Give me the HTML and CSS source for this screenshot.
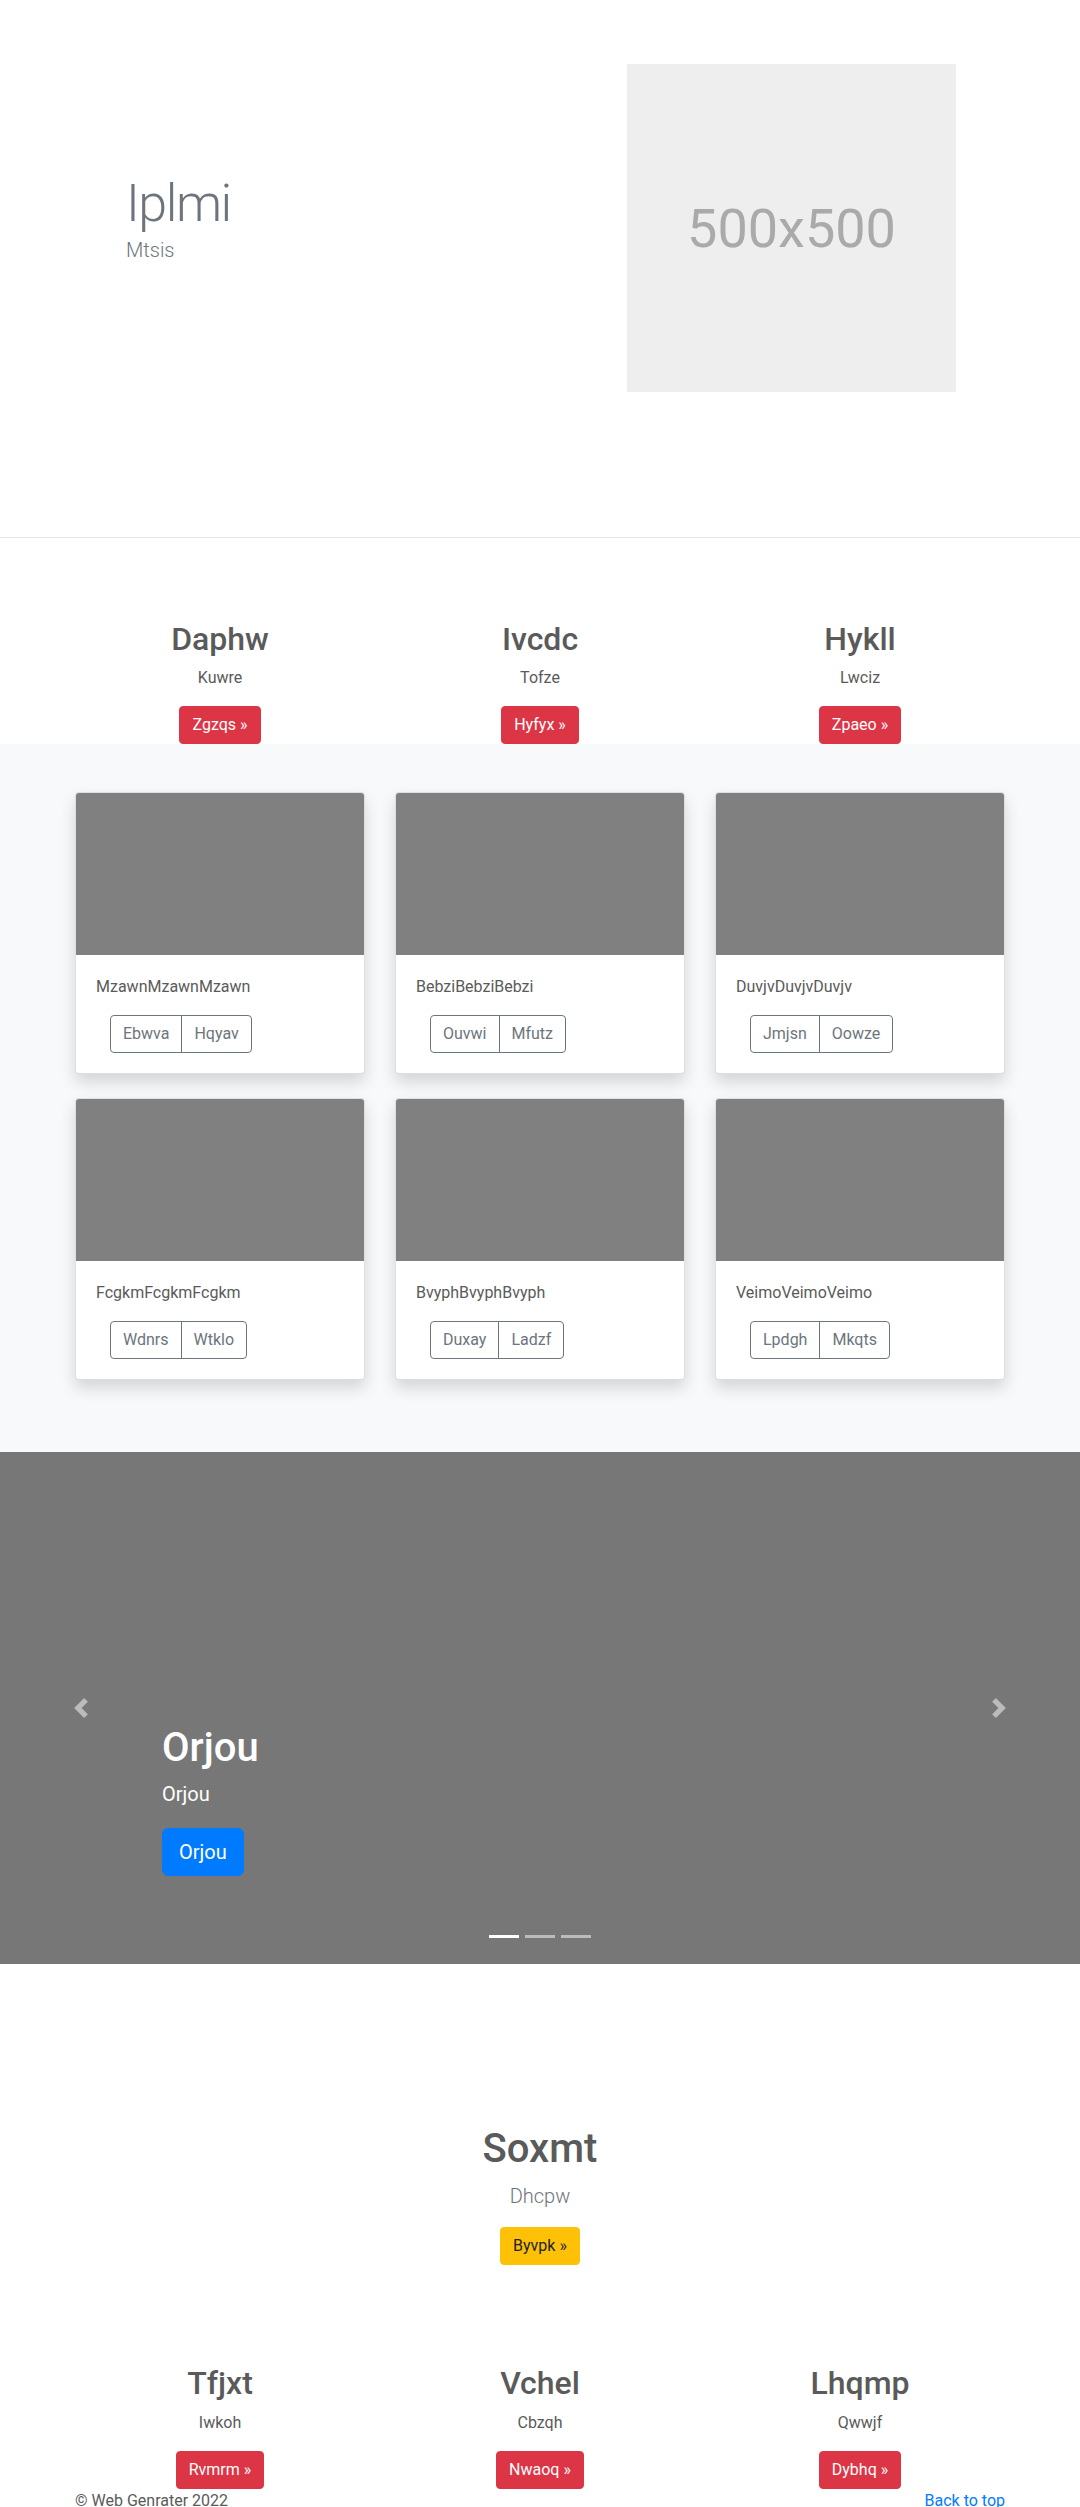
FILE: index.html
```html
<!DOCTYPE html>
<html lang="en">
<head>
<meta charset="utf-8">
<title>Web Genrater</title>
<link rel="stylesheet" href="styles.css">
</head>
<body>
<header class="hero">
  <div class="hero-text">
    <h1 class="hero-title">Iplmi</h1>
    <p class="hero-lead">Mtsis</p>
  </div>
  <div class="placeholder"><span>500x500</span></div>
</header>

<section class="marketing marketing-top">
  <div class="cols">
    <div class="col"><h2>Daphw</h2><p>Kuwre</p><a class="btn btn-danger" href="#">Zgzqs &raquo;</a></div>
    <div class="col"><h2>Ivcdc</h2><p>Tofze</p><a class="btn btn-danger" href="#">Hyfyx &raquo;</a></div>
    <div class="col"><h2>Hykll</h2><p>Lwciz</p><a class="btn btn-danger" href="#">Zpaeo &raquo;</a></div>
  </div>
</section>

<section class="album">
  <div class="card-grid">
    <div class="card">
      <div class="card-img"></div>
      <div class="card-body">
        <p class="card-text">MzawnMzawnMzawn</p>
        <div class="btn-group"><button class="btn-outline">Ebwva</button><button class="btn-outline">Hqyav</button></div>
      </div>
    </div>
    <div class="card">
      <div class="card-img"></div>
      <div class="card-body">
        <p class="card-text">BebziBebziBebzi</p>
        <div class="btn-group"><button class="btn-outline">Ouvwi</button><button class="btn-outline">Mfutz</button></div>
      </div>
    </div>
    <div class="card">
      <div class="card-img"></div>
      <div class="card-body">
        <p class="card-text">DuvjvDuvjvDuvjv</p>
        <div class="btn-group"><button class="btn-outline">Jmjsn</button><button class="btn-outline">Oowze</button></div>
      </div>
    </div>
    <div class="card">
      <div class="card-img"></div>
      <div class="card-body">
        <p class="card-text">FcgkmFcgkmFcgkm</p>
        <div class="btn-group"><button class="btn-outline">Wdnrs</button><button class="btn-outline">Wtklo</button></div>
      </div>
    </div>
    <div class="card">
      <div class="card-img"></div>
      <div class="card-body">
        <p class="card-text">BvyphBvyphBvyph</p>
        <div class="btn-group"><button class="btn-outline">Duxay</button><button class="btn-outline">Ladzf</button></div>
      </div>
    </div>
    <div class="card">
      <div class="card-img"></div>
      <div class="card-body">
        <p class="card-text">VeimoVeimoVeimo</p>
        <div class="btn-group"><button class="btn-outline">Lpdgh</button><button class="btn-outline">Mkqts</button></div>
      </div>
    </div>
  </div>
</section>

<section class="carousel">
  <a class="control control-prev" href="#" aria-label="Previous">
    <svg viewBox="0 0 8 8" width="20" height="20"><path d="M5.25 0l-4 4 4 4 1.5-1.5L4.25 4l2.5-2.5L5.25 0z"/></svg>
  </a>
  <div class="caption">
    <h1>Orjou</h1>
    <p class="caption-text">Orjou</p>
    <p class="caption-action"><a class="btn btn-lg btn-primary" href="#">Orjou</a></p>
  </div>
  <a class="control control-next" href="#" aria-label="Next">
    <svg viewBox="0 0 8 8" width="20" height="20"><path d="M2.75 0l-1.5 1.5L3.75 4l-2.5 2.5L2.75 8l4-4-4-4z"/></svg>
  </a>
  <ol class="indicators"><li class="active"></li><li></li><li></li></ol>
</section>

<section class="featurette">
  <h1>Soxmt</h1>
  <p class="lead">Dhcpw</p>
  <a class="btn btn-warning" href="#">Byvpk &raquo;</a>
</section>

<section class="marketing marketing-bottom">
  <div class="cols">
    <div class="col"><h2>Tfjxt</h2><p>Iwkoh</p><a class="btn btn-danger" href="#">Rvmrm &raquo;</a></div>
    <div class="col"><h2>Vchel</h2><p>Cbzqh</p><a class="btn btn-danger" href="#">Nwaoq &raquo;</a></div>
    <div class="col"><h2>Lhqmp</h2><p>Qwwjf</p><a class="btn btn-danger" href="#">Dybhq &raquo;</a></div>
  </div>
</section>

<footer class="footer">
  <p>&copy; Web Genrater 2022</p>
  <p><a href="#">Back to top</a></p>
</footer>
</body>
</html>
```

FILE: styles.css
```css
html, body {
  margin: 0;
  padding: 0;
}
body {
  font-family: Roboto, "Liberation Sans", sans-serif;
  font-size: 16px;
  line-height: 1.5;
  color: #5a5a5a;
  background: #fff;
}

/* Hero */
.hero {
  display: flex;
  height: 538px;
  box-sizing: border-box;
  padding-top: 64px;
  border-bottom: 1px solid #e5e5e5;
}
.hero-text {
  width: 627px;
  box-sizing: border-box;
  padding: 109px 0 0 126px;
}
.hero-title {
  margin: 0;
  font-size: 52px;
  font-weight: 300;
  line-height: 1.2;
  letter-spacing: -1.5px;
  color: #6c757d;
}
.hero-lead {
  margin: 3px 0 0;
  font-size: 20px;
  font-weight: 300;
  line-height: 24px;
  color: #6c757d;
}
.placeholder {
  width: 329px;
  height: 328px;
  background: #eee;
  color: #aaa;
  display: flex;
  align-items: center;
  justify-content: center;
  font-size: 54px;
}

/* Marketing columns */
.marketing-top {
  padding-top: 82px;
}
.marketing-bottom {
  padding-top: 99px;
}
.cols {
  width: 960px;
  margin: 0 auto;
  display: grid;
  grid-template-columns: repeat(3, 1fr);
  text-align: center;
}
.col h2 {
  margin: 0 0 8px;
  font-size: 32px;
  font-weight: 500;
  line-height: 1.2;
}
.col p {
  margin: 0 0 16px;
  font-size: 16px;
  line-height: 24px;
}

/* Buttons */
.btn {
  display: inline-block;
  vertical-align: top;
  font-size: 16px;
  line-height: 24px;
  padding: 6px 12px;
  border: 1px solid transparent;
  border-radius: 4px;
  text-decoration: none;
}
.btn-danger {
  background: #dc3545;
  border-color: #dc3545;
  color: #fff;
}
.btn-warning {
  background: #ffc107;
  border-color: #ffc107;
  color: #212529;
}
.btn-primary {
  background: #007bff;
  border-color: #007bff;
  color: #fff;
}
.btn-lg {
  font-size: 20px;
  line-height: 30px;
  padding: 8px 16px;
  border-radius: 6px;
  vertical-align: baseline;
}

/* Album */
.album {
  background: #f8f9fa;
  padding: 48px 0;
}
.card-grid {
  width: 930px;
  margin: 0 auto;
  padding-bottom: 24px;
  display: grid;
  grid-template-columns: repeat(3, 290px);
  column-gap: 30px;
  row-gap: 24px;
}
.card {
  background: #fff;
  border: 1px solid rgba(0, 0, 0, 0.125);
  border-radius: 4px;
  box-shadow: 0 8px 16px rgba(0, 0, 0, 0.15);
  overflow: hidden;
}
.card-img {
  height: 162px;
  background: #808080;
}
.card-body {
  padding: 20px;
}
.card-text {
  margin: 0 0 16px;
  font-size: 16px;
  line-height: 24px;
}
.btn-group {
  display: inline-flex;
  margin-left: 14px;
  vertical-align: top;
}
.btn-outline {
  font-family: inherit;
  font-size: 16px;
  line-height: 24px;
  padding: 6px 12px;
  margin: 0;
  background: transparent;
  border: 1px solid #6c757d;
  color: #6c757d;
  border-radius: 4px 0 0 4px;
}
.btn-outline + .btn-outline {
  margin-left: -1px;
  border-radius: 0 4px 4px 0;
}

/* Carousel */
.carousel {
  position: relative;
  height: 512px;
  background: #777;
}
.control {
  position: absolute;
  top: 0;
  bottom: 0;
  width: 15%;
  display: flex;
  align-items: center;
  justify-content: center;
  opacity: 0.5;
}
.control svg {
  fill: #fff;
}
.control-prev { left: 0; }
.control-next { right: 0; }
.caption {
  position: absolute;
  left: 15%;
  right: 15%;
  bottom: 48px;
  padding: 20px 0;
  color: #fff;
  text-align: left;
}
.caption h1 {
  margin: 0 0 8px;
  font-size: 40px;
  font-weight: 500;
  line-height: 1.2;
}
.caption-text {
  margin: 0 0 20px;
  font-size: 20px;
  line-height: 1.4;
}
.caption-action {
  margin: 0 0 20px;
  font-size: 20px;
  line-height: 1.4;
}
.indicators {
  position: absolute;
  left: 0;
  right: 0;
  bottom: 26px;
  margin: 0;
  padding: 0;
  list-style: none;
  display: flex;
  justify-content: center;
  gap: 6px;
}
.indicators li {
  width: 30px;
  height: 3px;
  background: rgba(255, 255, 255, 0.5);
}
.indicators li.active {
  background: #fff;
}

/* Featurette */
.featurette {
  padding-top: 161px;
  text-align: center;
}
.featurette h1 {
  margin: 0 0 8px;
  font-size: 40px;
  font-weight: 500;
  line-height: 1.2;
}
.featurette .lead {
  margin: 0 0 16px;
  font-size: 20px;
  font-weight: 300;
  line-height: 30px;
  color: #6c757d;
}

/* Footer */
.footer {
  width: 930px;
  margin: 0 auto;
  display: flex;
  justify-content: space-between;
}
.footer p {
  margin: 0;
  line-height: 24px;
}
.footer a {
  color: #007bff;
  text-decoration: none;
}
```
